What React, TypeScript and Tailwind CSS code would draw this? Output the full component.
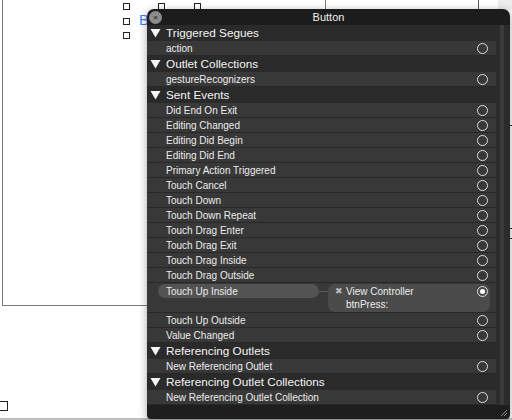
import React from 'react';

const font = { fontFamily: '"Liberation Sans", Arial, sans-serif' };

function Circle({ filled = false }: { filled?: boolean }) {
  return (
    <span className="w-[11px] h-[11px] rounded-full border-[1.5px] border-[#dedede] flex items-center justify-center shrink-0">
      {filled && <span className="w-[5px] h-[5px] rounded-full bg-white" />}
    </span>
  );
}

function Header({ label }: { label: string }) {
  return (
    <div className="h-[16px] flex items-center bg-[#2a2a2a] pl-[3px]">
      <svg width="11" height="10" viewBox="0 0 11 10" className="mr-[5px]">
        <path d="M0.5 1 L10.5 1 L5.5 9.5 Z" fill="#f4f4f4" />
      </svg>
      <span className="text-[11.75px] leading-none text-[#f4f4f4]">{label}</span>
    </div>
  );
}

function Row({ label }: { label: string }) {
  return (
    <div className="h-[15px] flex items-center bg-[#383838] border-b border-[#282828] pl-[19px] pr-[8px]">
      <span className="flex-1 pt-px text-[10px] leading-none text-[#ececec]">{label}</span>
      <Circle />
    </div>
  );
}

function ConnectedRow() {
  return (
    <div className="h-[30px] flex items-start bg-[#383838] border-b border-[#282828] pt-[1px] pl-[11px]">
      <div className="w-[161px] h-[14px] rounded-full bg-[#535353] flex items-center pl-[8px] pt-px text-[10px] leading-none text-[#ececec]">
        Touch Up Inside
      </div>
      <div className="w-[9px] h-[1px] mt-[7px] bg-[#5a5a5a]" />
      <div className="w-[162px] h-[28px] rounded-[7px] bg-[#4b4b4b] flex items-start pr-[2px]">
        <div className="flex-1 flex flex-col text-[10px] leading-none text-[#ececec]">
          <div className="h-[14px] flex items-center pt-px">
            <span className="w-[18px] pl-[7px] text-[9px] text-[#bdbdbd]">✖</span>
            <span>View Controller</span>
          </div>
          <div className="h-[14px] flex items-center pl-[18px]">btnPress:</div>
        </div>
        <div className="h-[14px] flex items-center">
          <Circle filled />
        </div>
      </div>
    </div>
  );
}

const sentEvents = [
  'Did End On Exit',
  'Editing Changed',
  'Editing Did Begin',
  'Editing Did End',
  'Primary Action Triggered',
  'Touch Cancel',
  'Touch Down',
  'Touch Down Repeat',
  'Touch Drag Enter',
  'Touch Drag Exit',
  'Touch Drag Inside',
  'Touch Drag Outside',
];

export default function App() {
  return (
    <div className="relative w-[512px] h-[420px] bg-white overflow-hidden" style={font}>
      {/* canvas behind the popover */}
      <div className="absolute left-[2px] top-[-10px] w-[324px] h-[316px] border border-[#7a7a7a]" />
      <div className="absolute left-[478px] top-0 w-px h-[10px] bg-[#555]" />
      <div className="absolute left-[498px] top-0 w-[14px] h-[10px] bg-[#ececec]" />
      <div className="absolute left-[509px] top-[125px] w-[3px] h-px bg-[#333]" />
      <div className="absolute left-[509px] top-[228px] w-[3px] h-px bg-[#333]" />
      <div className="absolute left-[509px] top-[238px] w-[3px] h-px bg-[#333]" />
      <div className="absolute left-[123px] top-[3px] w-[7px] h-[7px] border border-[#222] bg-white" />
      <div className="absolute left-[158px] top-[3px] w-[7px] h-[7px] border border-[#222] bg-white" />
      <div className="absolute left-[194px] top-[3px] w-[7px] h-[7px] border border-[#222] bg-white" />
      <div className="absolute left-[123px] top-[18px] w-[7px] h-[7px] border border-[#222] bg-white" />
      <div className="absolute left-[123px] top-[32px] w-[7px] h-[7px] border border-[#222] bg-white" />
      <div className="absolute left-[139px] top-[12px] text-[15px] leading-none text-[#3d83f0]">B</div>
      <div className="absolute left-[-2px] top-[401px] w-[10px] h-[10px] border border-[#222] bg-white" />
      <div className="absolute left-0 bottom-0 w-full h-[2px] bg-[#bdbdbd]" />

      {/* connections popover */}
      <div className="absolute left-[147px] top-[9px] w-[363px] flex flex-col rounded-t-[7px] rounded-b-[4px] overflow-hidden shadow-[0_2px_8px_rgba(0,0,0,0.35)]">
        <div className="h-[16px] bg-[#1c1c1c] flex items-center justify-center text-[11px] leading-none text-[#f0f0f0]">
          Button
        </div>
        <div className="flex">
          <div className="w-[349px] flex flex-col">
            <Header label="Triggered Segues" />
            <Row label="action" />
            <Header label="Outlet Collections" />
            <Row label="gestureRecognizers" />
            <Header label="Sent Events" />
            {sentEvents.map((e) => (
              <Row key={e} label={e} />
            ))}
            <ConnectedRow />
            <Row label="Touch Up Outside" />
            <Row label="Value Changed" />
            <Header label="Referencing Outlets" />
            <Row label="New Referencing Outlet" />
            <Header label="Referencing Outlet Collections" />
            <Row label="New Referencing Outlet Collection" />
          </div>
          <div className="flex-1 flex bg-[#2b2b2b]">
            <div className="w-[4px]" />
            <div className="w-[4px] bg-[#3a3a3a]" />
          </div>
        </div>
        <div className="h-[14px] bg-[#1e1e1e] flex items-center justify-end pr-[2px]">
          <svg width="10" height="10" viewBox="0 0 10 10">
            <path d="M9 3 L3 9 M9 6 L6 9" stroke="#8a8a8a" strokeWidth="1" />
          </svg>
        </div>
      </div>
      {/* close button */}
      <div className="absolute left-[149px] top-[11px] w-[13px] h-[13px] rounded-full bg-[#8c8c8c] flex items-center justify-center text-[8px] leading-none text-[#3a3a3a] font-bold">
        ×
      </div>
    </div>
  );
}
